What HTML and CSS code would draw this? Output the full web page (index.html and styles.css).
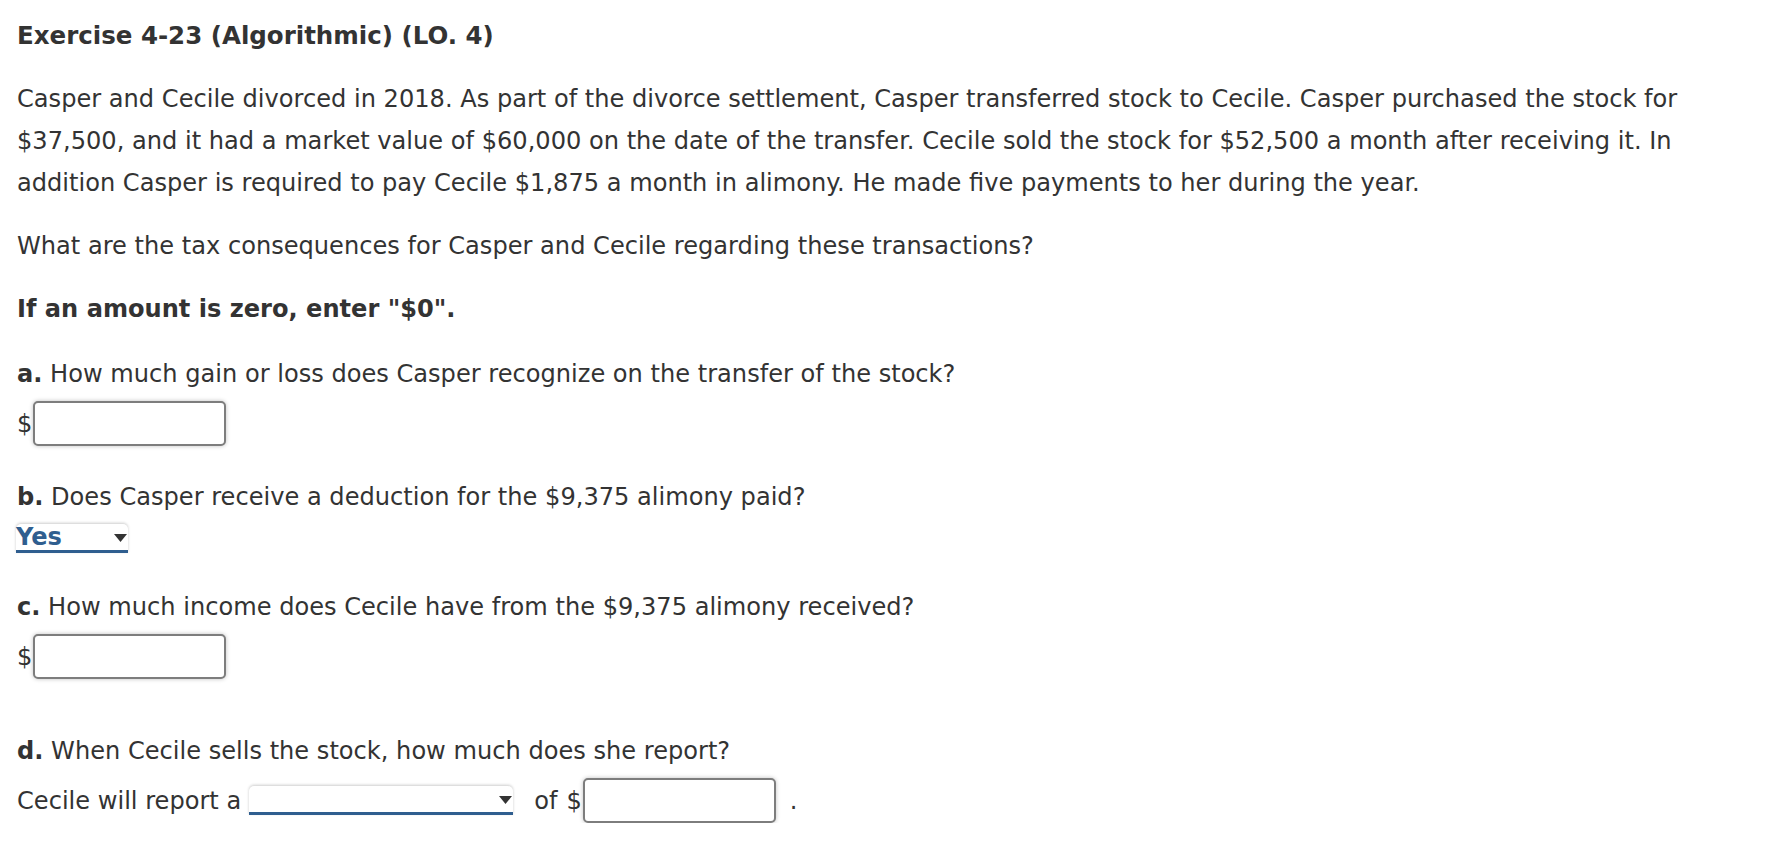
FILE: index.html
```html
<!DOCTYPE html>
<html>
<head>
<meta charset="utf-8">
<link rel="stylesheet" href="styles.css">
</head>
<body>
<div class="page">
  <div class="title">Exercise 4-23 (Algorithmic) (LO. 4)</div>
  <p class="para">Casper and Cecile divorced in 2018. As part of the divorce settlement, Casper transferred stock to Cecile. Casper purchased the stock for $37,500, and it had a market value of $60,000 on the date of the transfer. Cecile sold the stock for $52,500 a month after receiving it. In addition Casper is required to pay Cecile $1,875 a month in alimony. He made five payments to her during the year.</p>
  <p class="para">What are the tax consequences for Casper and Cecile regarding these transactions?</p>
  <p class="para bold">If an amount is zero, enter "$0".</p>

  <p class="para q"><b>a.</b> How much gain or loss does Casper recognize on the transfer of the stock?</p>
  <div class="row"><span class="dollar">$</span><input class="box" type="text"></div>

  <p class="para q qb"><b>b.</b> Does Casper receive a deduction for the $9,375 alimony paid?</p>
  <div class="row">
    <span class="sel sel-yes"><span class="sel-text">Yes</span><svg class="arrow" width="13" height="8" viewBox="0 0 13 8"><path d="M0 0H13L6.5 8Z" fill="#333"/></svg></span>
  </div>

  <p class="para q qc"><b>c.</b> How much income does Cecile have from the $9,375 alimony received?</p>
  <div class="row"><span class="dollar">$</span><input class="box" type="text"></div>

  <p class="para q qd"><b>d.</b> When Cecile sells the stock, how much does she report?</p>
  <div class="row rowd">
    <span class="lbl">Cecile will report a</span>
    <span class="sel sel-wide"><span class="sel-text"></span><svg class="arrow" width="13" height="8" viewBox="0 0 13 8"><path d="M0 0H13L6.5 8Z" fill="#333"/></svg></span>
    <span class="lbl of">of</span><span class="dollar">$</span><input class="box" type="text"><span class="lbl dot">.</span>
  </div>
</div>
</body>
</html>
```
FILE: styles.css
```css
html, body {
  margin: 0;
  padding: 0;
  background: #ffffff;
}
.page {
  padding: 15px 0 0 17px;
  font-family: Verdana, "DejaVu Sans", sans-serif;
  font-size: 24.1px;
  line-height: 42px;
  color: #333333;
}
.title {
  font-weight: bold;
  font-size: 24.5px;
  height: 42px;
}
.para {
  margin: 21px 0 0 0;
  width: 1700px;
}
.bold {
  font-weight: bold;
}
.q {
  margin-top: 23px;
}
.qb {
  margin-top: 30px;
}
.qc {
  margin-top: 33px;
}
.qd {
  margin-top: 51px;
}
.row {
  display: flex;
  align-items: center;
  margin-top: 6px;
}
.dollar {
  margin-right: 1px;
}
.box {
  width: 193px;
  height: 45px;
  box-sizing: border-box;
  border: 2px solid #7d7d7d;
  border-radius: 5px;
  box-shadow: 0 0 4px rgba(0, 0, 0, 0.25);
  margin: 0;
  padding: 0 6px;
  font: inherit;
  background: #fff;
}
.sel {
  position: relative;
  display: inline-flex;
  align-items: center;
  box-sizing: border-box;
  height: 29px;
  background: #fff;
  border-bottom: 3px solid #2f5e8f;
  border-radius: 5px 5px 0 0;
  box-shadow: 0 -1px 3px rgba(0, 0, 0, 0.2);
}
.sel-yes {
  width: 112px;
  margin-left: -1px;
}
.sel-wide {
  width: 264px;
  height: 29px;
  margin-left: 8px;
}
.sel-text {
  font-weight: bold;
  color: #2f5e8f;
  line-height: 26px;
}
.arrow {
  position: absolute;
  right: 1px;
  top: 10px;
}
.rowd {
  height: 45px;
}
.of {
  margin-left: 21px;
  margin-right: 9px;
}
.dot {
  margin-left: 14px;
}
```
